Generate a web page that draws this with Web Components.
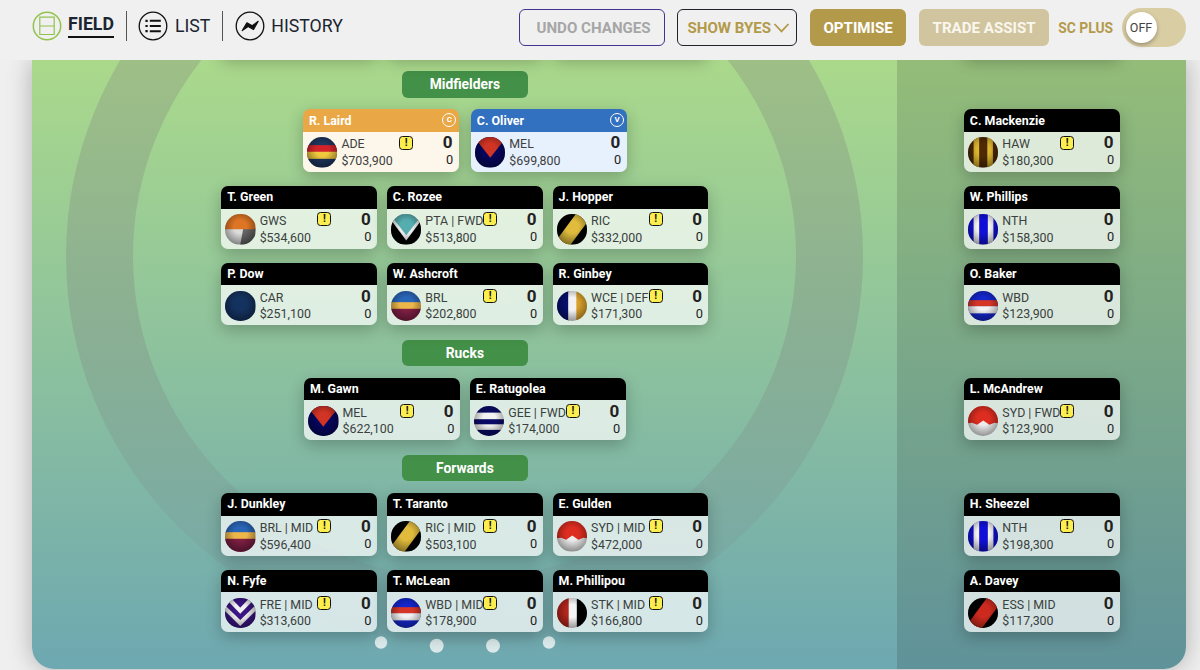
<!DOCTYPE html>
<html lang="en">
<head>
<meta charset="utf-8">
<title>My Team</title>
<style>
  body {
    margin: 0;
    height: 670px;
    overflow: hidden;
    background: #efefef;
    font-family: Roboto, "Liberation Sans", sans-serif;
    color: #1b2530;
  }
</style>
</head>
<body>
<nav-bar>
  <nav-tab icon="field" active>FIELD</nav-tab>
  <nav-tab icon="list">LIST</nav-tab>
  <nav-tab icon="history">HISTORY</nav-tab>
  <tool-button slot="tools" kind="undo" style="width:145.5px">UNDO CHANGES</tool-button>
  <tool-button slot="tools" kind="byes" style="width:120px">SHOW BYES</tool-button>
  <tool-button slot="tools" kind="solid" style="width:96.5px">OPTIMISE</tool-button>
  <tool-button slot="tools" kind="faded" style="width:130.5px">TRADE ASSIST</tool-button>
  <plus-toggle slot="tools" label="SC PLUS">OFF</plus-toggle>
</nav-bar>

<team-field>
  <position-line class="above">
    <player-row>
      <player-card></player-card><player-card></player-card><player-card></player-card>
    </player-row>
    <player-card slot="bench"></player-card>
  </position-line>

  <position-line label="Midfielders">
    <player-row wide>
      <player-card name="R. Laird" team="ADE" price="$703,900" role="C" alert></player-card>
      <player-card name="C. Oliver" team="MEL" price="$699,800" role="V"></player-card>
    </player-row>
    <player-row>
      <player-card name="T. Green" team="GWS" price="$534,600" alert></player-card>
      <player-card name="C. Rozee" team="PTA" also="FWD" price="$513,800" alert></player-card>
      <player-card name="J. Hopper" team="RIC" price="$332,000" alert></player-card>
    </player-row>
    <player-row>
      <player-card name="P. Dow" team="CAR" price="$251,100"></player-card>
      <player-card name="W. Ashcroft" team="BRL" price="$202,800" alert></player-card>
      <player-card name="R. Ginbey" team="WCE" also="DEF" price="$171,300" alert></player-card>
    </player-row>
    <player-card slot="bench" name="C. Mackenzie" team="HAW" price="$180,300" alert></player-card>
    <player-card slot="bench" name="W. Phillips" team="NTH" price="$158,300"></player-card>
    <player-card slot="bench" name="O. Baker" team="WBD" price="$123,900"></player-card>
  </position-line>

  <position-line label="Rucks">
    <player-row>
      <player-card name="M. Gawn" team="MEL" price="$622,100" alert></player-card>
      <player-card name="E. Ratugolea" team="GEE" also="FWD" price="$174,000" alert></player-card>
    </player-row>
    <player-card slot="bench" name="L. McAndrew" team="SYD" also="FWD" price="$123,900" alert></player-card>
  </position-line>

  <position-line label="Forwards">
    <player-row>
      <player-card name="J. Dunkley" team="BRL" also="MID" price="$596,400" alert></player-card>
      <player-card name="T. Taranto" team="RIC" also="MID" price="$503,100" alert></player-card>
      <player-card name="E. Gulden" team="SYD" also="MID" price="$472,000" alert></player-card>
    </player-row>
    <player-row>
      <player-card name="N. Fyfe" team="FRE" also="MID" price="$313,600" alert></player-card>
      <player-card name="T. McLean" team="WBD" also="MID" price="$178,900" alert></player-card>
      <player-card name="M. Phillipou" team="STK" also="MID" price="$166,800" alert></player-card>
    </player-row>
    <player-card slot="bench" name="H. Sheezel" team="NTH" price="$198,300" alert></player-card>
    <player-card slot="bench" name="A. Davey" team="ESS" also="MID" price="$117,300"></player-card>
  </position-line>
</team-field>

<script>
const NAV_ICONS = {
  field: `<g fill="none" stroke="#92c24e" stroke-width="1.5"><circle cx="15" cy="15" r="13.7"/>
    <path d="M7.8 6.2h14.4v17.3H7.8zM7.8 15h14.4" stroke-width="1.2"/></g>`,
  list: `<g fill="none" stroke="#111" stroke-width="1.3"><circle cx="15" cy="15" r="13.8"/>
    <path d="M11.8 9.8h11M11.8 15h11M11.8 20.2h11" stroke-width="2"/>
    <path d="M7.4 9.8h2.3M7.4 15h2.3M7.4 20.2h2.3" stroke-width="2.2"/></g>`,
  history: `<circle cx="15" cy="15" r="13.8" fill="none" stroke="#111" stroke-width="1.3"/>
    <path d="M7.3 19.6l4.6-7.8 5.3 2.9 6-4.4-4.7 8.2-5.4-3.1z" fill="#111" stroke="#111" stroke-width="1.2" stroke-linejoin="round"/>`
};

// guernsey patterns, each drawn on a 30x30 box and clipped to a circle
const bands = (...list) => list.map(([fill, y, h]) => `<rect y="${y}" width="30" height="${h}" fill="${fill}"/>`).join('');
const stripes = (...list) => list.map(([fill, x, w]) => `<rect x="${x}" width="${w}" height="30" fill="${fill}"/>`).join('');
const sash = (base, fill) => `<rect width="30" height="30" fill="${base}"/><path d="M0 25L20 -2L32 5L12 32z" fill="${fill}"/>`;

const TEAMS = {
  ADE: bands(['#20375f', 0, 30], ['#d2232a', 8, 7], ['#f0c93e', 14.5, 7]),
  MEL: '<rect width="30" height="30" fill="#05055e"/><path d="M-1 0H31L15 20.5z" fill="#d03424"/>',
  GWS: '<rect width="30" height="30" fill="#dcdcdc"/><path d="M18 14H30V30H15z" fill="#666"/><rect width="30" height="15" fill="#de7524"/>',
  PTA: '<rect width="30" height="30" fill="#000"/><path d="M0 6L15 26L30 6V0H0z" fill="#eee"/><path d="M1 3L15 21L29 3V0H1z" fill="#55adb0"/>',
  RIC: sash('#000', '#e0bb3c'),
  ESS: sash('#000', '#cc2a1e'),
  CAR: '<rect width="30" height="30" fill="#14325f"/>',
  BRL: bands(['#2a66b8', 0, 12], ['#edb64a', 11, 7], ['#7f1f44', 17.5, 13]),
  WCE: stripes(['#06106e', 0, 12], ['#f2f2f2', 11, 9], ['#d9a02c', 19, 11]),
  HAW: stripes(['#4d2906', 0, 30], ['#dcb52f', 5.5, 5.5], ['#dcb52f', 19, 5.5]),
  NTH: stripes(['#1010d8', 0, 30], ['#f2f2f2', 5.5, 5.5], ['#f2f2f2', 19.5, 5.5]),
  WBD: bands(['#1426cc', 0, 30], ['#d43527', 9, 6.5], ['#f2f2f2', 15, 7]),
  GEE: bands(['#f2f2f2', 0, 30], ['#0a0a66', 0, 6.5], ['#0a0a66', 13, 5], ['#0a0a66', 23.5, 7]),
  SYD: '<rect width="30" height="30" fill="#ececec"/><path d="M0 17L4 16.5L9 18.5L15 14.2L21 18.5L26 16.5L30 17V0H0z" fill="#dd2d20"/>',
  FRE: `<rect width="30" height="30" fill="#3a1583"/><g fill="none" stroke="#f2f2f2" stroke-width="4.2">
    <path d="M2 -1L15 12.5L28 -1M-2 8L15 24.5L32 8" /></g>`,
  STK: stripes(['#b3261d', 0, 12], ['#f4f4f4', 11.5, 8.5], ['#000', 19.5, 11])
};

class NavBar extends HTMLElement {
  constructor() {
    super();
    this.attachShadow({mode: 'open'}).innerHTML = `
      <style>
        :host {
          display: flex;
          justify-content: space-between;
          box-sizing: border-box;
          height: 60px;
          padding: 0 14px 5px 31.5px;
          position: relative;
          z-index: 2;
          background: #f0f0f0;
        }
        nav, .tools { display: flex; align-items: center; }
        nav { height: 52px; }
        .tools { gap: 12.5px; }
      </style>
      <nav><slot></slot></nav>
      <div class="tools"><slot name="tools"></slot></div>
    `;
  }
}

class NavTab extends HTMLElement {
  constructor() {
    super();
    this.attachShadow({mode: 'open'}).innerHTML = `
      <style>
        :host { display: flex; align-items: center; height: 30px; font-size: 17.7px; }
        :host(:not(:last-of-type)) { border-right: 1px solid #555; padding-right: 12px; margin-right: 11.5px; }
        svg { width: 30px; height: 30px; margin-right: 6.5px; }
        span { line-height: 21px; padding-top: 1px; }
        :host([active]) span {
          font-weight: 700;
          padding: 0 0 1.5px;
          border-bottom: 2.5px solid #111;
        }
      </style>
      <svg viewBox="0 0 30 30">${NAV_ICONS[this.getAttribute('icon')]}</svg>
      <span><slot></slot></span>
    `;
  }
}

class ToolButton extends HTMLElement {
  constructor() {
    super();
    const chevron = this.getAttribute('kind') === 'byes' ?
      '<svg width="17" height="12" viewBox="0 0 17 12"><path d="M1.5 2L8.5 9.4L15.5 2" fill="none" stroke="#b39a4a" stroke-width="1.8"/></svg>' : '';

    this.attachShadow({mode: 'open'}).innerHTML = `
      <style>
        :host {
          display: flex;
          align-items: center;
          justify-content: center;
          box-sizing: border-box;
          height: 37.5px;
          border-radius: 6px;
          font-size: 15.1px;
          font-weight: 700;
          white-space: nowrap;
          color: #fff;
        }
        :host([kind=undo]) { border: 1.5px solid #43328f; color: #a6a6a6; padding-left: 3px; }
        :host([kind=byes]) { border: 1.5px solid #22222c; color: #b39a4a; padding-left: 3px; }
        :host([kind=solid]) { background: #b39a4b; }
        :host([kind=faded]) { background: #d1c5a0; color: #faf7ee; }
        svg { margin-left: 2px; }
      </style>
      <slot></slot>${chevron}
    `;
  }
}

class PlusToggle extends HTMLElement {
  constructor() {
    super();
    this.attachShadow({mode: 'open'}).innerHTML = `
      <style>
        :host { display: flex; align-items: center; gap: 9px; margin-left: -3.5px; }
        b { font-size: 13.8px; color: #b39a4a; white-space: nowrap; }
        .track {
          display: flex;
          align-items: center;
          box-sizing: border-box;
          width: 64px;
          height: 39px;
          padding-left: 3.5px;
          border-radius: 20px;
          background: #d9cda3;
        }
        .knob {
          width: 31px;
          height: 31px;
          border-radius: 50%;
          background: #fff;
          box-shadow: 0 2px 4px rgba(0, 0, 0, .3);
          font-size: 12.5px;
          line-height: 32px;
          text-align: center;
          color: #444;
        }
      </style>
      <b>${this.getAttribute('label')}</b>
      <div class="track"><div class="knob"><slot></slot></div></div>
    `;
  }
}

class TeamField extends HTMLElement {
  constructor() {
    super();
    this.attachShadow({mode: 'open'}).innerHTML = `
      <style>
        :host {
          display: block;
          position: relative;
          box-sizing: border-box;
          width: 1154px;
          height: 608.5px;
          margin-left: 32px;
          border-radius: 0 0 22px 22px;
          background:
            linear-gradient(90deg, transparent 865px, rgba(0, 0, 0, .135) 865px),
            linear-gradient(#aad98b, #6ea8b1);
          box-shadow: 0 0 24px rgba(0, 0, 0, .28);
        }
        .ground { position: absolute; left: 0; top: 0; }
        .lines { position: relative; height: 608.5px; overflow: hidden; border-radius: inherit; }
      </style>
      <svg class="ground" width="865" height="608">
        <linearGradient id="ring" x1="0" y1="0" x2="0" y2="1">
          <stop offset=".6" stop-color="#786e78" stop-opacity=".24"/>
          <stop offset="1" stop-color="#786e78" stop-opacity=".06"/>
        </linearGradient>
        <ellipse cx="432.5" cy="196" rx="365" ry="355.5" fill="none" stroke="url(#ring)" stroke-width="67"/>
        <g fill="#fff" fill-opacity=".75">
          <circle cx="349" cy="582.5" r="6.2"/>
          <circle cx="404.7" cy="585.7" r="7"/>
          <circle cx="461" cy="585.7" r="7"/>
          <circle cx="517" cy="582.5" r="6.2"/>
        </g>
      </svg>
      <div class="lines"><slot></slot></div>
    `;
  }
}

class PositionLine extends HTMLElement {
  constructor() {
    super();
    const label = this.getAttribute('label');
    this.attachShadow({mode: 'open'}).innerHTML = `
      <style>
        :host { display: flex; margin-bottom: 14.7px; }
        :host(.above) { margin-top: -66px; }
        .main, .bench { display: flex; flex-direction: column; align-items: center; gap: 14px; }
        .main, .bench { box-sizing: border-box; padding-left: .8px; }
        .main { width: 865px; }
        .bench { width: 289px; padding-top: ${label ? 37.8 : 0}px; }
        h2 {
          width: 125.5px;
          height: 26.2px;
          margin: 0 0 -2.4px;
          border-radius: 6px;
          background: #439048;
          color: #fff;
          font-size: 13.8px;
          line-height: 26px;
          text-align: center;
        }
      </style>
      <div class="main">${label ? `<h2>${label}</h2>` : ''}<slot></slot></div>
      <div class="bench"><slot name="bench"></slot></div>
    `;
  }
}

class PlayerRow extends HTMLElement {
  constructor() {
    super();
    this.attachShadow({mode: 'open'}).innerHTML = `
      <style>
        :host { display: flex; gap: 10px; }
        :host([wide]) { gap: 12.2px; }
      </style>
      <slot></slot>
    `;
  }
}

class TeamBall extends HTMLElement {
  constructor() {
    super();
    this.attachShadow({mode: 'open'}).innerHTML = `
      <style>
        :host {
          display: block;
          width: 30.5px;
          height: 30.5px;
          border-radius: 50%;
          overflow: hidden;
        }
        svg { display: block; width: 100%; height: 100%; }
      </style>
      <svg viewBox="0 0 30 30">
        <radialGradient id="shade" cx=".5" cy=".42" r=".6">
          <stop offset=".35" stop-opacity="0"/>
          <stop offset="1" stop-opacity=".42"/>
        </radialGradient>
        ${TEAMS[this.getAttribute('team')] || ''}
        <rect width="30" height="30" fill="url(#shade)"/>
      </svg>
    `;
  }
}

class PlayerCard extends HTMLElement {
  constructor() {
    super();
    this.attachShadow({mode: 'open'});
  }

  connectedCallback() {
    const get = name => this.getAttribute(name) || '';
    const style = `
      <style>
        :host {
          display: block;
          position: relative;
          width: 155.7px;
          height: 62.7px;
          border-radius: 7px;
          box-shadow: 0 5px 16px rgba(0, 0, 0, .24);
          --head: #000;
          --body: rgba(255, 255, 255, .71);
        }
        :host([role=C]) { --head: #e9a845; --body: #fdf6ea; }
        :host([role=V]) { --head: #3270c0; --body: #e7f0fd; }
        header {
          display: flex;
          align-items: center;
          justify-content: space-between;
          box-sizing: border-box;
          height: 22.7px;
          padding: 0 2.5px 1px 5.8px;
          border-radius: 7px 7px 0 0;
          background: var(--head);
          color: #fff;
          font-size: 12.4px;
          font-weight: 700;
        }
        header i {
          box-sizing: border-box;
          width: 14px;
          height: 14px;
          border: 1.3px solid #fff;
          border-radius: 50%;
          font: 700 8px/12.5px Roboto, sans-serif;
          text-align: center;
        }
        .body {
          display: flex;
          box-sizing: border-box;
          height: 40px;
          padding: 5.5px 5.5px 0 3.8px;
          border-radius: 0 0 7px 7px;
          background: var(--body);
          color: #3a4140;
          font-size: 12.4px;
          line-height: 16.5px;
          white-space: nowrap;
        }
        .info { margin: -1px 0 0 4px; flex: 1; }
        .score { text-align: right; margin-top: -4px; color: #222; }
        .score b { display: block; font-size: 17px; line-height: 18px; margin-right: .8px; }
        .score span { display: block; font-size: 12.8px; line-height: 17px; }
        .alert {
          position: absolute;
          left: 96px;
          top: 26.5px;
          box-sizing: border-box;
          width: 14px;
          height: 14px;
          border: 1.4px solid #111;
          border-radius: 3.5px;
          background: #fcee4f;
          color: #111;
          font: 700 10.5px/11.5px Roboto, sans-serif;
          text-align: center;
        }
      </style>`;

    // cards without a player only keep their place in the row
    if (!get('name')) {
      this.shadowRoot.innerHTML = style;
      return;
    }

    this.shadowRoot.innerHTML = `
      ${style}
      <header>${get('name')}${get('role') ? `<i>${get('role')}</i>` : ''}</header>
      <div class="body">
        <team-ball team="${get('team')}"></team-ball>
        <div class="info">
          <div>${get('team')}${get('also') ? ` | ${get('also')}` : ''}</div>
          <div>${get('price')}</div>
        </div>
        <div class="score"><b>0</b><span>0</span></div>
      </div>
      ${this.hasAttribute('alert') ? '<div class="alert">!</div>' : ''}
    `;
  }
}

customElements.define('nav-bar', NavBar);
customElements.define('nav-tab', NavTab);
customElements.define('tool-button', ToolButton);
customElements.define('plus-toggle', PlusToggle);
customElements.define('team-field', TeamField);
customElements.define('position-line', PositionLine);
customElements.define('player-row', PlayerRow);
// defined ahead of player-card: cards put balls into their shadow root
customElements.define('team-ball', TeamBall);
customElements.define('player-card', PlayerCard);
</script>
</body>
</html>
